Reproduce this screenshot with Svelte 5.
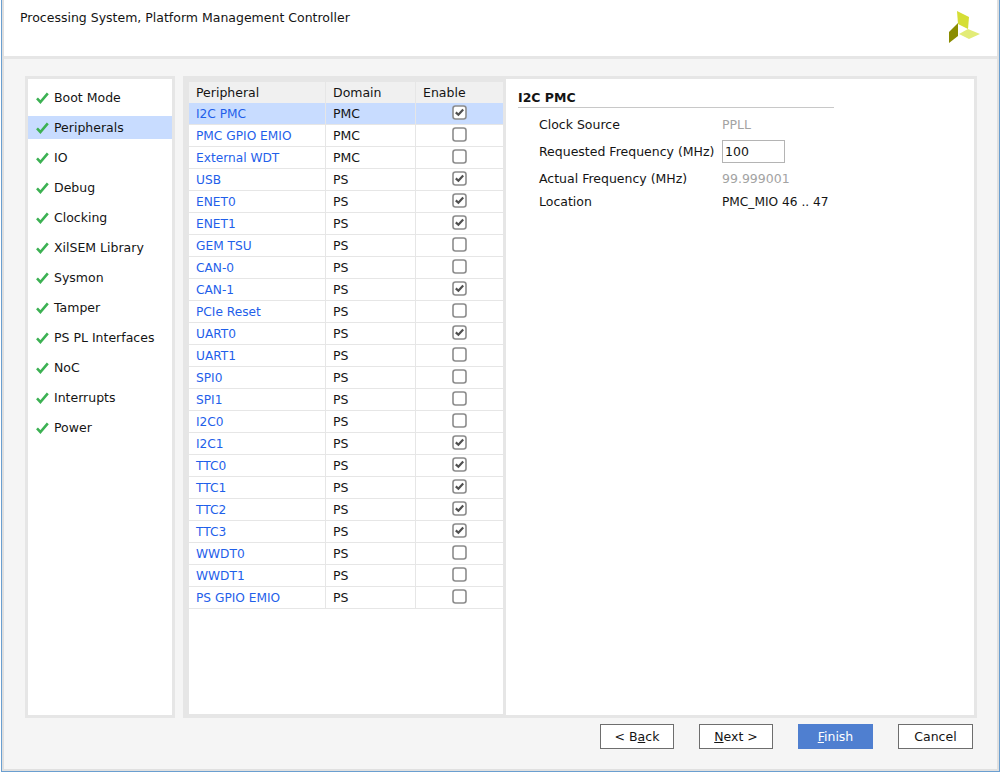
<script lang="ts">
    const steps = [
        "Boot Mode",
        "Peripherals",
        "IO",
        "Debug",
        "Clocking",
        "XilSEM Library",
        "Sysmon",
        "Tamper",
        "PS PL Interfaces",
        "NoC",
        "Interrupts",
        "Power"
    ]

    const rows = [
        { name: "I2C PMC", domain: "PMC", on: true },
        { name: "PMC GPIO EMIO", domain: "PMC", on: false },
        { name: "External WDT", domain: "PMC", on: false },
        { name: "USB", domain: "PS", on: true },
        { name: "ENET0", domain: "PS", on: true },
        { name: "ENET1", domain: "PS", on: true },
        { name: "GEM TSU", domain: "PS", on: false },
        { name: "CAN-0", domain: "PS", on: false },
        { name: "CAN-1", domain: "PS", on: true },
        { name: "PCIe Reset", domain: "PS", on: false },
        { name: "UART0", domain: "PS", on: true },
        { name: "UART1", domain: "PS", on: false },
        { name: "SPI0", domain: "PS", on: false },
        { name: "SPI1", domain: "PS", on: false },
        { name: "I2C0", domain: "PS", on: false },
        { name: "I2C1", domain: "PS", on: true },
        { name: "TTC0", domain: "PS", on: true },
        { name: "TTC1", domain: "PS", on: true },
        { name: "TTC2", domain: "PS", on: true },
        { name: "TTC3", domain: "PS", on: true },
        { name: "WWDT0", domain: "PS", on: false },
        { name: "WWDT1", domain: "PS", on: false },
        { name: "PS GPIO EMIO", domain: "PS", on: false }
    ]
</script>

<div class="window">
    <div class="frame">
        <header>
            <span class="title">Processing System, Platform Management Controller</span>
            <svg class="logo" width="32" height="33" viewBox="0 0 32 33">
                <polygon points="8,0 20,6 19,18 9,13" fill="#d5de35" />
                <polygon points="10,23 19,18 31,23 20,28" fill="#e3ec77" />
                <polygon points="0,21 9,12 9,25 0,32" fill="#8a8c00" />
            </svg>
        </header>

        <main>
            <div class="body">
                <nav>
                    {#each steps as step, i}
                        <div class="step" class:active={i === 1}>
                            <svg width="13" height="12" viewBox="0 0 13 12">
                                <path d="M1 6.4 L4.4 10 L11.8 1.4" fill="none" stroke="#3cb153" stroke-width="2.6" />
                            </svg>
                            <span>{step}</span>
                        </div>
                    {/each}
                </nav>

                <div class="split">
                    <div class="table">
                        <div class="row head">
                            <div>Peripheral</div>
                            <div>Domain</div>
                            <div>Enable</div>
                        </div>
                        {#each rows as row, i}
                            <div class="row" class:selected={i === 0}>
                                <div class="link">{row.name}</div>
                                <div>{row.domain}</div>
                                <div class="check">
                                    <svg width="15" height="15" viewBox="0 0 15 15">
                                        <rect x="1" y="1" width="13" height="13" rx="2.5" fill="#fff" stroke="#8c8c8c" stroke-width="1.6" />
                                        {#if row.on}
                                            <path d="M3.8 7.4 L6.4 9.8 L11.2 4.6" fill="none" stroke="#505050" stroke-width="2.2" />
                                        {/if}
                                    </svg>
                                </div>
                            </div>
                        {/each}
                    </div>

                    <section>
                        <h3>I2C PMC</h3>
                        <div class="props">
                            <div class="prop"><span>Clock Source</span><span class="muted">PPLL</span></div>
                            <div class="prop tall">
                                <span>Requested Frequency (MHz)</span>
                                <input type="text" value="100" />
                            </div>
                            <div class="prop"><span>Actual Frequency (MHz)</span><span class="muted">99.999001</span></div>
                            <div class="prop"><span>Location</span><span class="narrow">PMC_MIO 46 .. 47</span></div>
                        </div>
                    </section>
                </div>
            </div>

            <footer>
                <button>&lt; B<u>a</u>ck</button>
                <button><u>N</u>ext &gt;</button>
                <button class="primary"><u>F</u>inish</button>
                <button class="wide">Cancel</button>
            </footer>
        </main>
    </div>
</div>

<style>
    :global(body) {
        margin: 0;
        background: #fff;
    }
    .window {
        box-sizing: border-box;
        width: 999px;
        height: 772px;
        margin-left: 1px;
        border: 1px solid #6b9fd0;
        border-top: none;
        font-family: "DejaVu Sans", sans-serif;
        font-size: 12.5px;
        color: #141414;
    }
    .frame {
        box-sizing: border-box;
        height: 100%;
        display: flex;
        flex-direction: column;
        border: solid #e0e0e0;
        border-width: 0 2px 2px 2px;
        background: #f5f5f5;
    }
    header {
        height: 59px;
        box-sizing: border-box;
        flex: none;
        display: flex;
        justify-content: space-between;
        align-items: flex-start;
        background: #fff;
        border-bottom: 3px solid #e6e6e6;
        padding-left: 16px;
        padding-right: 16px;
    }
    .title {
        margin-top: 10px;
    }
    .logo {
        margin-top: 11px;
    }
    main {
        flex: 1;
        display: flex;
        flex-direction: column;
        padding: 17px 20px 0 21px;
    }
    .body {
        display: flex;
        gap: 8px;
        height: 642px;
    }
    nav {
        box-sizing: border-box;
        width: 150px;
        border: 3px solid #e6e6e6;
        background: #fff;
        padding-top: 7px;
        display: flex;
        flex-direction: column;
        gap: 7px;
    }
    .step {
        height: 23px;
        display: flex;
        align-items: center;
        gap: 5px;
        padding-left: 8px;
    }
    .step.active {
        background: #c8dcff;
    }
    .split {
        flex: 1;
        display: flex;
        gap: 3px;
        background: #e6e6e6;
        padding: 3px;
    }
    .table {
        width: 314px;
        margin: 3px 0 1px 3px;
        background: #fff;
    }
    .row {
        display: grid;
        grid-template-columns: 137px 90px 87px;
        height: 22px;
        box-sizing: border-box;
        border-bottom: 1px solid #e6e6e6;
    }
    .row > div {
        box-sizing: border-box;
        padding-left: 7px;
        line-height: 21px;
        border-right: 1px solid #e6e6e6;
    }
    .row > div:last-child {
        border-right: none;
    }
    .row.head {
        height: 21px;
        background: #f0f0f0;
        border-bottom: none;
    }
    .row.selected {
        background: #c8dcff;
    }
    .row > .link {
        color: #1f5fea;
        font-size: 12.2px;
        line-height: 22px;
    }
    .row > .check {
        padding: 2px 0 0 36px;
        line-height: 0;
    }
    section {
        flex: 1;
        background: #fff;
        padding: 11px 12px;
    }
    h3 {
        margin: 0;
        width: 316px;
        box-sizing: border-box;
        font-size: 12.5px;
        font-weight: bold;
        line-height: 15px;
        padding-bottom: 2px;
        border-bottom: 1px solid #c8c8c8;
        color: #141414;
    }
    .props {
        padding: 5px 0 0 21px;
    }
    .prop {
        display: grid;
        grid-template-columns: 183px auto;
        align-items: center;
        height: 23px;
    }
    .prop.tall {
        height: 31px;
    }
    .muted {
        color: #a3a3a3;
    }
    .narrow {
        font-size: 12.2px;
    }
    input {
        box-sizing: border-box;
        width: 63px;
        height: 23px;
        border: 1px solid #b4b4b4;
        padding: 0 2px;
        font: inherit;
        color: #141414;
        outline: none;
    }
    footer {
        display: flex;
        justify-content: flex-end;
        gap: 25px;
        margin-top: 6px;
        padding-right: 4px;
    }
    button {
        box-sizing: border-box;
        width: 74px;
        height: 25px;
        padding: 0;
        border: 1px solid #6e6e6e;
        background: #fff;
        font: inherit;
        color: #141414;
    }
    button.wide {
        width: 75px;
    }
    button.primary {
        width: 75px;
        border: none;
        background: #4f7fd0;
        color: #fff;
    }
</style>
